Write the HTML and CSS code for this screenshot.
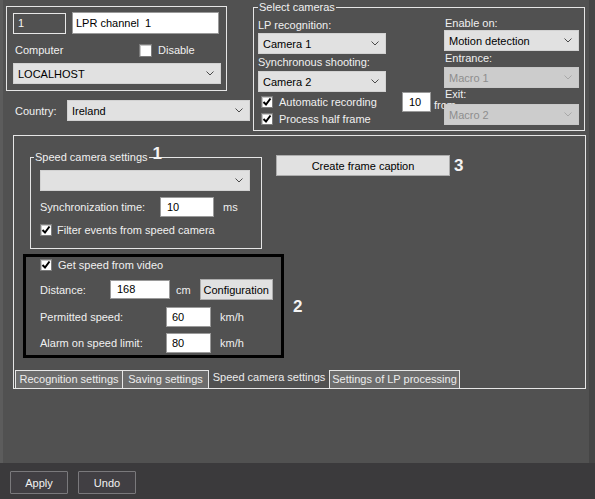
FILE: index.html
```html
<!DOCTYPE html>
<html>
<head>
<meta charset="utf-8">
<link rel="stylesheet" href="styles.css">
</head>
<body>
<div class="window">
  <div class="main">
    <div class="top">
      <div class="left-col">
        <div class="ident-box">
          <div class="row1">
            <div class="field dark-field">1</div>
            <div class="field name-field">LPR channel&nbsp; 1</div>
          </div>
          <div class="row2">
            <span class="computer-lbl">Computer</span>
            <span class="cb"></span>
            <span class="cb-lbl">Disable</span>
          </div>
          <div class="sel host-sel"><span>LOCALHOST</span><svg class="chev" width="8" height="5" viewBox="0 0 8 5"><polyline points="0.5,0.5 4,4 7.5,0.5" fill="none" stroke="#4a4a4a" stroke-width="1"/></svg></div>
        </div>
        <div class="country-row">
          <span class="country-lbl">Country:</span>
          <div class="sel country-sel"><span>Ireland</span><svg class="chev" width="8" height="5" viewBox="0 0 8 5"><polyline points="0.5,0.5 4,4 7.5,0.5" fill="none" stroke="#4a4a4a" stroke-width="1"/></svg></div>
        </div>
      </div>

      <div class="group cams">
        <span class="legend"><span class="legend-text">Select cameras</span></span>
        <div class="cams-left">
          <div class="lbl lp-lbl">LP recognition:</div>
          <div class="sel cam-sel cam1"><span>Camera 1</span><svg class="chev" width="8" height="5" viewBox="0 0 8 5"><polyline points="0.5,0.5 4,4 7.5,0.5" fill="none" stroke="#4a4a4a" stroke-width="1"/></svg></div>
          <div class="lbl sync-lbl">Synchronous shooting:</div>
          <div class="sel cam-sel cam2"><span>Camera 2</span><svg class="chev" width="8" height="5" viewBox="0 0 8 5"><polyline points="0.5,0.5 4,4 7.5,0.5" fill="none" stroke="#4a4a4a" stroke-width="1"/></svg></div>
          <div class="cb-row first-cb">
            <span class="cb checked"><svg width="10" height="10" viewBox="0 0 10 10"><polyline points="1.5,5 4,7.5 8.5,1.5" fill="none" stroke="#000" stroke-width="2"/></svg></span>
            <span class="cb-lbl">Automatic recording</span>
          </div>
          <div class="cb-row">
            <span class="cb checked"><svg width="10" height="10" viewBox="0 0 10 10"><polyline points="1.5,5 4,7.5 8.5,1.5" fill="none" stroke="#000" stroke-width="2"/></svg></span>
            <span class="cb-lbl">Process half frame</span>
          </div>
        </div>
        <div class="cams-mid">
          <div class="field rec-field">10</div>
          <span class="from-lbl">from</span>
        </div>
        <div class="cams-right">
          <div class="lbl enable-lbl">Enable on:</div>
          <div class="sel motion-sel"><span>Motion detection</span><svg class="chev" width="8" height="5" viewBox="0 0 8 5"><polyline points="0.5,0.5 4,4 7.5,0.5" fill="none" stroke="#4a4a4a" stroke-width="1"/></svg></div>
          <div class="lbl entrance-lbl">Entrance:</div>
          <div class="sel disabled macro1"><span>Macro 1</span><svg class="chev" width="8" height="5" viewBox="0 0 8 5"><polyline points="0.5,0.5 4,4 7.5,0.5" fill="none" stroke="#a8a8a8" stroke-width="1"/></svg></div>
          <div class="lbl exit-lbl">Exit:</div>
          <div class="sel disabled macro2"><span>Macro 2</span><svg class="chev" width="8" height="5" viewBox="0 0 8 5"><polyline points="0.5,0.5 4,4 7.5,0.5" fill="none" stroke="#a8a8a8" stroke-width="1"/></svg></div>
        </div>
      </div>
    </div>

    <div class="tab-panel">
      <div class="panel-top">
        <div class="group speed-group">
          <span class="legend"><span class="legend-text">Speed camera settings</span><b class="num num1">1</b></span>
          <div class="sel speed-sel"><span></span><svg class="chev" width="8" height="5" viewBox="0 0 8 5"><polyline points="0.5,0.5 4,4 7.5,0.5" fill="none" stroke="#4a4a4a" stroke-width="1"/></svg></div>
          <div class="sync-row">
            <span class="sync-time-lbl">Synchronization time:</span>
            <div class="field sync-field">10</div>
            <span class="unit">ms</span>
          </div>
          <div class="cb-row filter-row">
            <span class="cb checked"><svg width="10" height="10" viewBox="0 0 10 10"><polyline points="1.5,5 4,7.5 8.5,1.5" fill="none" stroke="#000" stroke-width="2"/></svg></span>
            <span class="cb-lbl">Filter events from speed camera</span>
          </div>
        </div>
        <button class="btn caption-btn">Create frame caption</button>
        <b class="num num3">3</b>
      </div>

      <div class="panel-mid">
        <div class="video-box">
          <div class="cb-row video-cb">
            <span class="cb checked"><svg width="10" height="10" viewBox="0 0 10 10"><polyline points="1.5,5 4,7.5 8.5,1.5" fill="none" stroke="#000" stroke-width="2"/></svg></span>
            <span class="cb-lbl">Get speed from video</span>
          </div>
          <div class="vrow dist-row">
            <span class="vlbl dist-lbl">Distance:</span>
            <div class="field dist-field">168</div>
            <span class="unit cm">cm</span>
            <button class="btn config-btn">Configuration</button>
          </div>
          <div class="vrow speed-row">
            <span class="vlbl speed-lbl">Permitted speed:</span>
            <div class="field kmh-field">60</div>
            <span class="unit kmh">km/h</span>
          </div>
          <div class="vrow speed-row alarm-row">
            <span class="vlbl speed-lbl">Alarm on speed limit:</span>
            <div class="field kmh-field">80</div>
            <span class="unit kmh">km/h</span>
          </div>
        </div>
        <b class="num num2">2</b>
      </div>

      <div class="tabs">
        <div class="tab t1">Recognition settings</div>
        <div class="tab t2">Saving settings</div>
        <div class="tab active t3">Speed camera settings</div>
        <div class="tab t4">Settings of LP processing</div>
      </div>
    </div>
  </div>

  <div class="bottom">
    <button class="dark-btn">Apply</button>
    <button class="dark-btn">Undo</button>
  </div>
</div>
</body>
</html>
```

FILE: styles.css
```css
* { box-sizing: border-box; }
html, body { margin: 0; padding: 0; }
body {
  width: 595px;
  height: 499px;
  overflow: hidden;
  background: #515151;
  font-family: "Liberation Sans", Arial, sans-serif;
  font-size: 11px;
  color: #f0f0f0;
}
.window { display: flex; flex-direction: column; height: 499px; }
.main {
  height: 463px;
  background: #515151;
  border-left: 3px solid #5c5c5c;
  border-right: 6px solid #454545;
}
.top { display: flex; align-items: flex-start; }

/* generic controls */
.field {
  height: 22px;
  line-height: 20px;
  padding-left: 3px;
  border: 1px solid #9a9a9a;
  background: #fff;
  color: #000;
  white-space: nowrap;
}
.sel {
  display: flex;
  align-items: center;
  justify-content: space-between;
  height: 21px;
  padding: 0 6px 0 4px;
  background: #e1e1e1;
  border: 1px solid #d2d2d2;
  color: #000;
  white-space: nowrap;
}
.sel.disabled { background: #cccccc; border-color: #c8c8c8; color: #8e8e8e; }
.chev { flex: none; }
.cb {
  flex: none;
  width: 12px;
  height: 12px;
  background: #fff;
  border: 1px solid #7c7c7c;
  box-shadow: inset 1px 1px 0 #c8c8c8;
  display: flex;
  align-items: center;
  justify-content: center;
}
.cb-row { display: flex; align-items: center; height: 17px; }
.cb-lbl { margin-left: 5px; white-space: nowrap; }
.lbl { height: 14px; line-height: 14px; white-space: nowrap; }
.num { font-size: 17px; font-weight: bold; color: #f4f4f4; line-height: 18px; }

.group { position: relative; border: 1px solid #e6e6e6; }
.legend {
  position: absolute;
  top: -8px;
  left: 4px;
  display: flex;
  align-items: center;
  height: 14px;
}
.legend-text { background: #515151; padding: 0 1px; line-height: 14px; }

/* ident box */
.left-col { margin: 6px 0 0 3px; width: 244px; }
.ident-box { width: 221px; height: 85px; border: 1px solid #e6e6e6; padding: 5px 6px 0; }
.row1 { display: flex; align-items: flex-start; gap: 6px; }
.dark-field { width: 53px; height: 21px; margin-top: 1px; background: #515151; border: 1px solid #e8e8e8; color: #f4f4f4; padding-left: 4px; line-height: 19px; }
.name-field { width: 147px; }
.row2 { display: flex; align-items: center; height: 18px; margin-top: 7px; }
.computer-lbl { width: 126px; padding-left: 2px; }
.row2 .cb { width: 13px; height: 13px; }
.row2 .cb-lbl { margin-left: 6px; }
.host-sel { width: 208px; margin-top: 4px; }

.country-row { display: flex; align-items: center; margin-top: 9px; height: 21px; }
.country-lbl { width: 61px; padding-left: 9px; }
.country-sel { width: 183px; }

/* select cameras group */
.cams {
  margin: 7px 0 0 3px;
  width: 332px;
  height: 124px;
  display: grid;
  grid-template-columns: 127px 59px 135px;
  padding: 0 5px 0 4px;
}
.cams-left { padding-top: 10px; }
.cam-sel { width: 128px; }
.cam1 { margin-top: 1px; }
.sync-lbl { margin-top: 1px; }
.cam2 { margin-top: 2px; }
.first-cb { margin-top: 1px; }
.cams-left .cb-row { padding-left: 3px; }
.cams-left .cb-lbl { margin-left: 6px; }

.cams-mid { display: flex; align-items: flex-start; padding: 84px 0 0 17px; }
.rec-field { flex: none; width: 29px; height: 20px; line-height: 18px; padding-left: 6px; }
.from-lbl { margin: 6px 0 0 3px; line-height: 14px; white-space: nowrap; }

.cams-right { position: relative; padding-top: 8px; }
.cams-right .lbl { padding-left: 1px; }
.motion-sel { margin-top: 0; }
.entrance-lbl { margin-top: 0; }
.macro1 { margin-top: 2px; }
.exit-lbl { height: 13px; line-height: 13px; margin-top: 0; }
.macro2 { margin-top: 3px; }

/* tab panel */
.tab-panel {
  margin: 4px 0 0 10px;
  width: 573px;
  height: 254px;
  border: 1px solid #e6e6e6;
  display: flex;
  flex-direction: column;
}
.panel-top { display: flex; align-items: flex-start; }
.speed-group { margin: 21px 0 0 16px; width: 232px; height: 92px; padding: 12px 0 0 9px; }
.speed-group .legend { top: -9px; height: 16px; left: 3px; }
.num1 { margin-left: 4px; margin-top: -6px; }
.speed-sel { width: 210px; }
.sync-row { display: flex; align-items: center; margin-top: 6px; height: 20px; }
.sync-time-lbl { width: 120px; }
.sync-field { width: 54px; height: 20px; line-height: 18px; padding-left: 6px; }
.unit { margin-left: 9px; white-space: nowrap; }
.filter-row { margin-top: 4px; }

.btn {
  font-family: inherit;
  font-size: 11px;
  color: #000;
  background: #e1e1e1;
  border: 1px solid #adadad;
  padding: 0;
  height: 21px;
}
.caption-btn { margin: 19px 0 0 14px; width: 174px; }
.num3 { margin: 21px 0 0 4px; }

.panel-mid { display: flex; align-items: center; }
.video-box {
  margin: 5px 0 0 9px;
  width: 261px;
  height: 104px;
  border: 3px solid #000;
  padding: 0 0 0 14px;
}
.video-cb { height: 16px; }
.video-cb .cb-lbl { margin-left: 6px; }
.vrow { display: flex; align-items: center; }
.dist-row { margin-top: 6px; height: 21px; }
.dist-lbl { width: 70px; }
.dist-field { width: 60px; height: 19px; line-height: 17px; padding-left: 6px; }
.cm { margin-left: 6px; }
.config-btn { margin-left: 9px; width: 73px; }
.speed-row { margin-top: 7px; height: 20px; }
.alarm-row { margin-top: 6px; }
.speed-lbl { width: 126px; }
.kmh-field { width: 45px; height: 20px; line-height: 18px; padding-left: 5px; }
.kmh { margin-left: 9px; }
.num2 { margin: 6px 0 0 9px; }

.tabs { margin-top: auto; display: flex; padding-left: 1px; height: 18px; }
.tab {
  height: 18px;
  line-height: 17px;
  text-align: center;
  white-space: nowrap;
  background: #6c6c6c;
  border: 1px solid #e6e6e6;
  border-bottom: none;
  color: #ececec;
}
.t1 { width: 108px; }
.t2 { width: 86px; border-left: none; }
.t3 { width: 120px; background: transparent; border: none; line-height: 14px; }
.t4 { width: 131px; }

/* bottom bar */
.bottom {
  height: 36px;
  background: #3b3a3c;
  display: flex;
  gap: 10px;
  padding: 8px 0 0 10px;
}
.dark-btn {
  width: 58px;
  height: 23px;
  background: #413f43;
  border: 1px solid #7a797c;
  border-radius: 1px;
  color: #f2f2f2;
  font-family: inherit;
  font-size: 11px;
  padding: 0;
}
```
